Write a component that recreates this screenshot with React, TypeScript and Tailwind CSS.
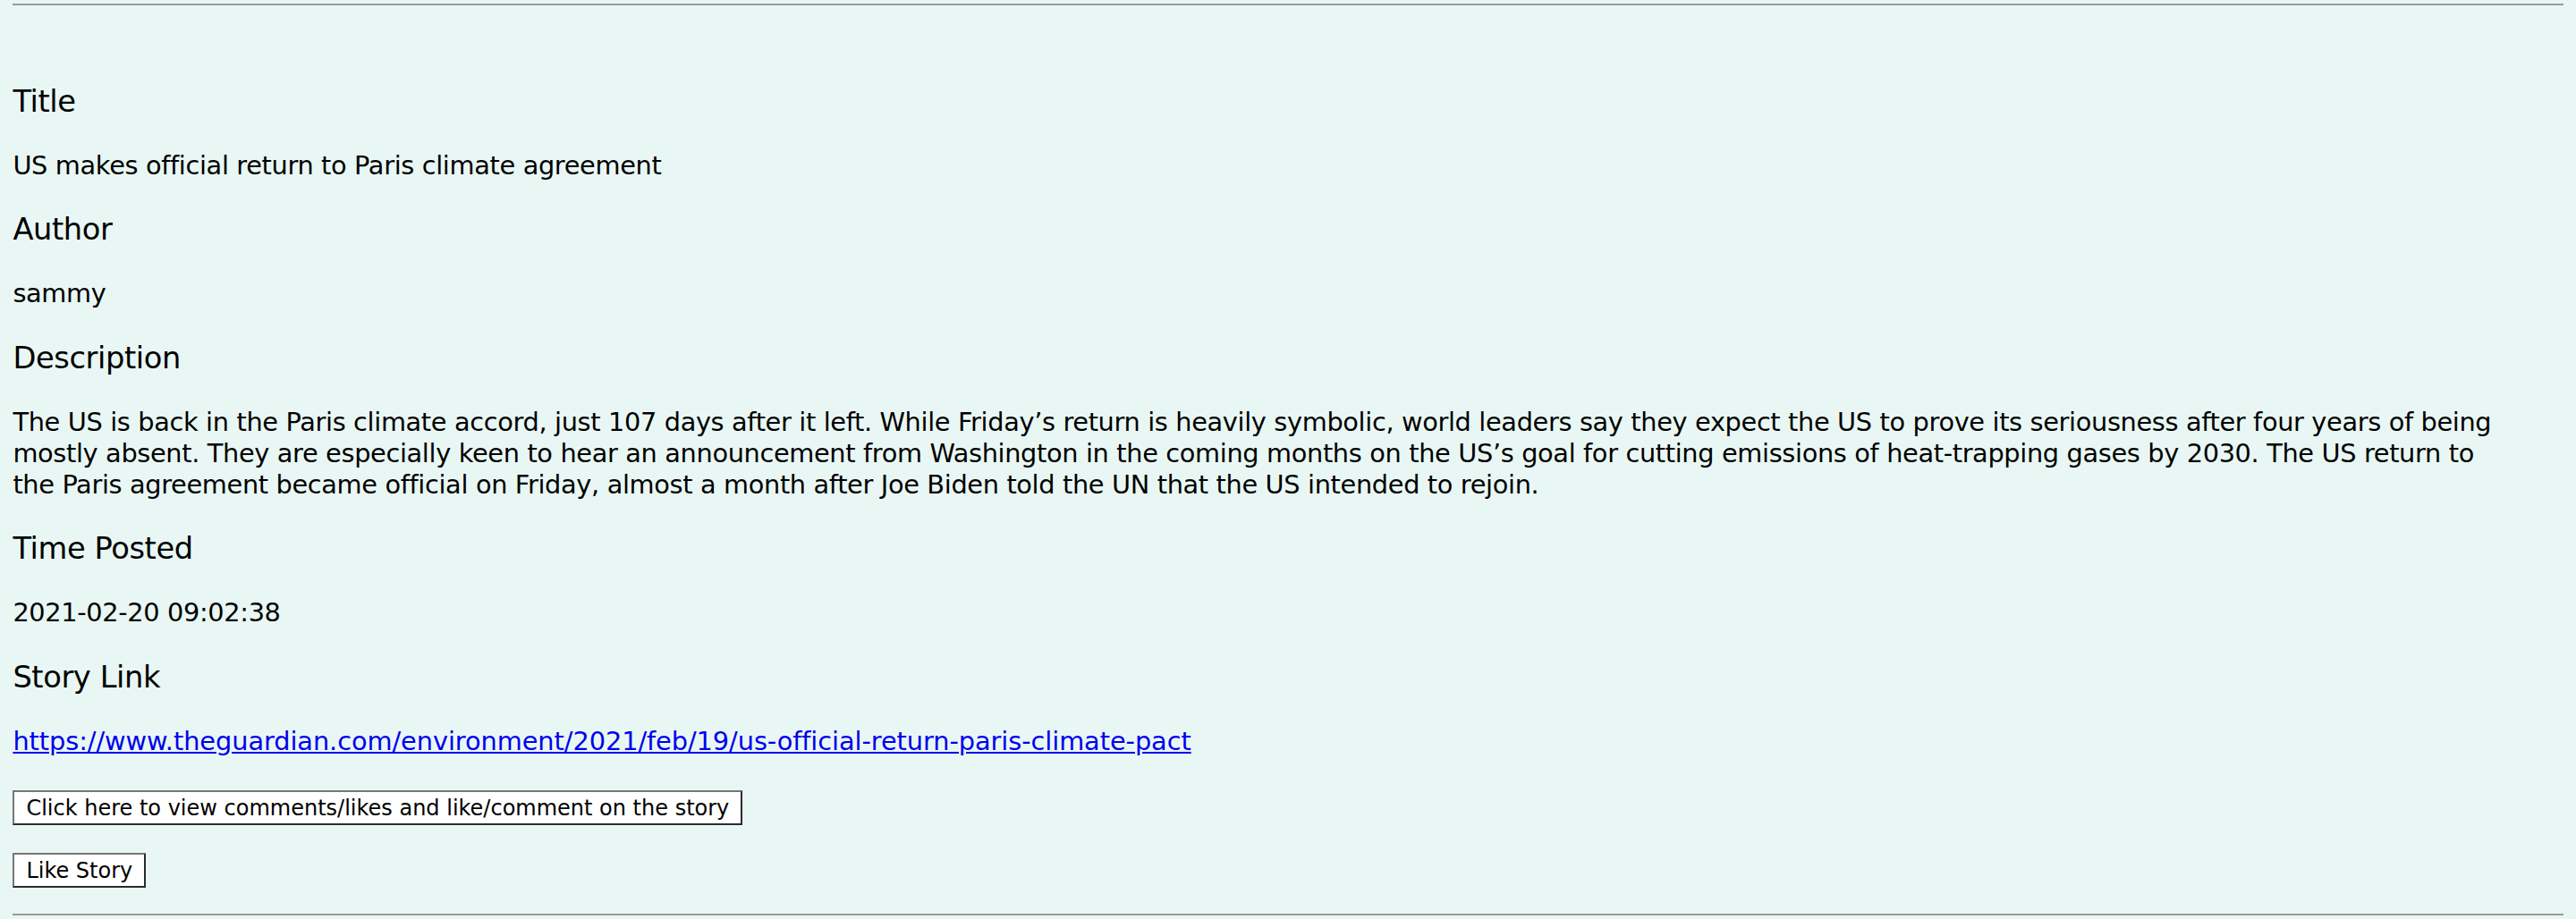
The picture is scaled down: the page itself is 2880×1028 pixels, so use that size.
import React from "react";

const font = { fontFamily: "'DejaVu Sans', 'Liberation Sans', sans-serif" };

function Heading({ children }: { children: React.ReactNode }) {
  return <h3 className="my-[33.7px] text-[33.7px] font-normal leading-[41px] tracking-[-0.4px] text-black">{children}</h3>;
}

function Para({ children }: { children: React.ReactNode }) {
  return <p className="my-[28.8px] text-[28.8px] leading-[35.1px] tracking-[-0.35px] text-black">{children}</p>;
}

const btn =
  "flex h-[39px] items-center border-2 border-t-[#767676] border-l-[#767676] border-b-[#2b2b2b] border-r-[#2b2b2b] bg-white px-[13px] text-[24px] leading-none tracking-[0px] text-black";

export default function App() {
  return (
    <div className="min-h-[1028px] bg-[#e9f7f4] px-[14.4px] pt-[4px] pb-[4px]" style={font}>
      <div className="h-[2px] bg-[#9a9a9a]" />
      <div className="pt-[53.2px]">
        <Heading>Title</Heading>
        <Para>US makes official return to Paris climate agreement</Para>
        <Heading>Author</Heading>
        <Para>sammy</Para>
        <Heading>Description</Heading>
        <Para>
          The US is back in the Paris climate accord, just 107 days after it left. While Friday’s return is heavily symbolic, world leaders say they expect the US to prove its seriousness after four years of being
          <br />
          mostly absent. They are especially keen to hear an announcement from Washington in the coming months on the US’s goal for cutting emissions of heat-trapping gases by 2030. The US return to
          <br />
          the Paris agreement became official on Friday, almost a month after Joe Biden told the UN that the US intended to rejoin.
        </Para>
        <Heading>Time Posted</Heading>
        <Para>2021-02-20 09:02:38</Para>
        <Heading>Story Link</Heading>
        <p className="mt-[28.8px] mb-0 text-[28.8px] leading-[35.1px] tracking-[-0.07px]">
          <a href="#" className="text-[#0000ee] underline">
            https://www.theguardian.com/environment/2021/feb/19/us-official-return-paris-climate-pact
          </a>
        </p>
        <div className="mt-[37.4px] flex flex-col items-start gap-[31px]">
          <button className={btn}>Click here to view comments/likes and like/comment on the story</button>
          <button className={btn}>Like Story</button>
        </div>
        <div className="mt-[29px] h-[2px] bg-[#9a9a9a]" />
      </div>
    </div>
  );
}
